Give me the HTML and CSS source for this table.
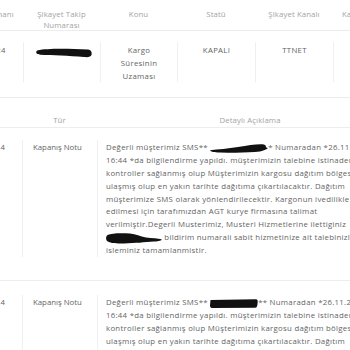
FILE: index.html
```html
<!DOCTYPE html>
<html lang="tr">
<head>
<meta charset="utf-8">
<title>Şikayet Detayı</title>
<link rel="stylesheet" href="styles.css">
</head>
<body>
<div class="viewport">
  <div class="sheet">
    <section class="table t1">
      <div class="row head cols-1">
        <div class="th">Oluşma Zamanı</div>
        <div class="th">Şikayet Takip Numarası</div>
        <div class="th">Konu</div>
        <div class="th">Statü</div>
        <div class="th">Şikayet Kanalı</div>
        <div class="th">Kayıt Oluşturma Tarihi</div>
      </div>
      <div class="row body cols-1">
        <div class="cell center">26.11.2024</div>
        <div class="cell center"><svg class="redact r-track" viewBox="0 0 56 11"><path d="M2 3.2 C10 1.5 30 1.2 52 2.6 C55.5 3 56 5.5 55.6 7.8 C55 10 52 10.4 48 10 C33 8.8 16 8.3 4.5 7.8 C1 7.6 0 6.2 0.3 4.8 C0.5 3.8 1.1 3.4 2 3.2 Z"/></svg></div>
        <div class="cell center">Kargo Süresinin Uzaması</div>
        <div class="cell center">KAPALI</div>
        <div class="cell center">TTNET</div>
        <div class="cell center">26.11.2024</div>
      </div>
    </section>

    <section class="table t2">
      <div class="row head cols-2">
        <div class="th">Tarih</div>
        <div class="th">Tür</div>
        <div class="th">Detaylı Açıklama</div>
      </div>
      <div class="row body first cols-2">
        <div class="cell center">26.11.2024</div>
        <div class="cell type">Kapanış Notu</div>
        <div class="cell desc">Değerli müşterimiz SMS** <svg class="redact r-phone" viewBox="0 0 58 11"><path d="M0 7.2 C8 6.4 18 5.6 28 4 C38 2.2 46 1 52 1.2 C55 1.3 56.5 2.6 55.8 4.2 C57 4.6 58 5 57.6 5.6 C56 6.4 54 7.6 50 8.6 C40 9.8 24 9.8 10 9.4 C4 9.3 0.5 8.8 0 7.2 Z"/></svg>* Numaradan *26.11.2024 16:44 *da bilgilendirme yapıldı. müşterimizin talebine istinaden kontroller sağlanmış olup Müşterimizin kargosu dağıtım bölgesine ulaşmış olup en yakın tarihte dağıtıma çıkartılacaktır. Dağıtım müşterimize SMS olarak yönlendirilecektir. Kargonun ivedilikle teslim edilmesi için tarafımızdan AGT kurye firmasına talimat verilmiştir.Degerli Musterimiz, Musteri Hizmetlerine ilettiginiz <svg class="redact r-line" viewBox="0 0 56 12"><path d="M1.5 3 C6 1.2 14 0.8 24 1.6 C30 2.2 34 4.6 40 5.6 C46 6.4 52 6.4 55.5 7.2 C56.2 8.2 54 9.2 48 9.6 C38 10.4 30 11.2 18 11.4 C10 11.6 3 11 1 9 C-0.4 7.2 -0.2 4.4 1.5 3 Z"/></svg> bildirim numarali sabit hizmetinize ait talebinizle ilgili isleminiz tamamlanmistir.</div>
      </div>
      <div class="row body second cols-2">
        <div class="cell center">26.11.2024</div>
        <div class="cell type">Kapanış Notu</div>
        <div class="cell desc">Değerli müşterimiz SMS** <svg class="redact r-phone2" viewBox="0 0 48 11"><path d="M0.5 2 L46 1.2 C47.5 1.2 48 2.5 47.6 5 C47.4 8 47 9.8 45 9.8 L2 10 C0.6 10 0 9 0 7.5 Z"/></svg>** Numaradan *26.11.2024 16:44 *da bilgilendirme yapıldı. müşterimizin talebine istinaden kontroller sağlanmış olup Müşterimizin kargosu dağıtım bölgesine ulaşmış olup en yakın tarihte dağıtıma çıkartılacaktır. Dağıtım müşterimize SMS olarak yönlendirilecektir.</div>
      </div>
    </section>
  </div>
</div>
</body>
</html>
```

FILE: styles.css
```css
* {
  box-sizing: border-box;
}

html,
body {
  margin: 0;
  background: #ffffff;
}

body {
  font-family: "Open Sans", "Noto Sans", sans-serif;
  font-size: 7.8px;
  letter-spacing: 0.29px;
  color: #646464;
}

.viewport {
  width: 350px;
  height: 350px;
  overflow: hidden;
}

.sheet {
  width: 480px;
  margin-left: -54px;
}

.cols-1 {
  display: grid;
  grid-template-columns: 77px 77px 77px 78px 78px 78px;
}

.cols-2 {
  display: grid;
  grid-template-columns: 76px 75px 306px;
}

.row {
  border-bottom: 1px solid #ededed;
}

.head {
  color: #a3a3a3;
  text-align: center;
  line-height: 10.5px;
  letter-spacing: 0.1px;
}

.th {
  padding: 0 8px;
}

.t1 .head {
  padding-top: 9px;
}

.t2 .head {
  padding-top: 17px;
  padding-bottom: 1px;
}

.body {
  line-height: 12.8px;
}

.cell {
  border-left: 1px solid #f0f0f0;
  padding: 0 8px;
}

.cell:first-child {
  border-left: 0;
}

.center {
  text-align: center;
}

.t1 .body {
  padding: 11px 0 15px;
}

.t1 .cell {
  padding: 2px 12px 0;
}

.t2 .body.first {
  padding: 12px 0 23px;
}

.t2 .body.second {
  padding: 14px 0 20px;
}

.t2 .cell {
  padding-top: 1.5px;
}

.type {
  padding-left: 10px;
  letter-spacing: 0;
}

.desc {
  padding-left: 8px;
  padding-right: 23px;
}

.redact {
  display: inline-block;
  fill: #111111;
  vertical-align: middle;
}

.r-track {
  width: 56px;
  height: 11px;
  margin-top: 3px;
}

.r-phone {
  width: 58px;
  height: 11px;
}

.r-phone2 {
  width: 48px;
  height: 11px;
}

.r-line {
  width: 56px;
  height: 12px;
}
```
